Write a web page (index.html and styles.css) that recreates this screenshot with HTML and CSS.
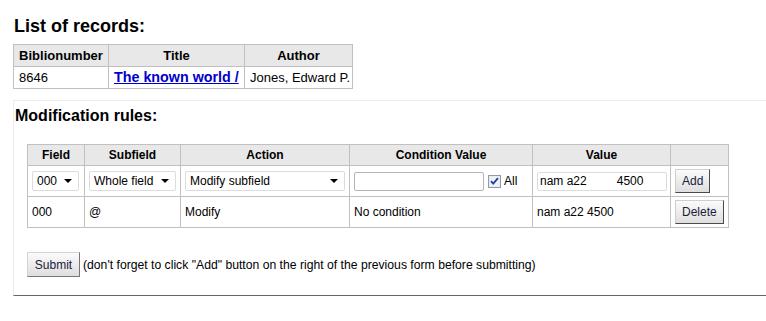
FILE: index.html
```html
<!DOCTYPE html>
<html>
<head>
<meta charset="utf-8">
<title>Batch record modification</title>
<link rel="stylesheet" href="styles.css">
</head>
<body>
<div class="page">
  <h1 class="title">List of records:</h1>
  <table class="records">
    <colgroup><col class="c-bib"><col class="c-title"><col class="c-author"></colgroup>
    <thead>
      <tr><th>Biblionumber</th><th>Title</th><th>Author</th></tr>
    </thead>
    <tbody>
      <tr><td>8646</td><td><a class="rec-link" href="#">The known world /</a></td><td>Jones, Edward P.</td></tr>
    </tbody>
  </table>

  <div class="rules-box">
    <h2 class="subtitle">Modification rules:</h2>
    <table class="rules">
      <colgroup><col class="r-field"><col class="r-sub"><col class="r-action"><col class="r-cond"><col class="r-value"><col class="r-btn"></colgroup>
      <thead>
        <tr><th>Field</th><th>Subfield</th><th>Action</th><th>Condition Value</th><th>Value</th><th></th></tr>
      </thead>
      <tbody>
        <tr class="form-row">
          <td><span class="sel sel-field"><select><option>000</option></select></span></td>
          <td><span class="sel sel-sub"><select><option>Whole field</option></select></span></td>
          <td><span class="sel sel-action"><select><option>Modify subfield</option></select></span></td>
          <td>
            <div class="cond">
              <input class="txt txt-cond" type="text">
              <label class="chk"><svg width="13" height="13" viewBox="0 0 13 13"><rect x="0.5" y="0.5" width="12" height="12" fill="#dfe6ef" stroke="#8c9cb3"/><rect x="1.5" y="1.5" width="10" height="10" fill="#eef2f7"/><path d="M3 6.2 L5.2 8.6 L10 3.2" fill="none" stroke="#21409a" stroke-width="1.8"/></svg><span>All</span></label>
            </div>
          </td>
          <td><input class="txt txt-value" type="text" value="nam a22         4500"></td>
          <td><button class="btn" type="button">Add</button></td>
        </tr>
        <tr class="data-row">
          <td>000</td>
          <td>@</td>
          <td>Modify</td>
          <td>No condition</td>
          <td>nam a22 4500</td>
          <td><button class="btn" type="button">Delete</button></td>
        </tr>
      </tbody>
    </table>

    <div class="submit-line">
      <button class="btn btn-submit" type="button">Submit</button>
      <span class="hint">(don't forget to click "Add" button on the right of the previous form before submitting)</span>
    </div>
  </div>
</div>
</body>
</html>
```

FILE: styles.css
```css
html, body {
  margin: 0;
  padding: 0;
  background: #ffffff;
}

body {
  font-family: "Liberation Sans", Arial, sans-serif;
  color: #000;
  font-size: 12px;
}

.page {
  padding-left: 13px;
}

.title {
  font-size: 18px;
  line-height: 22px;
  font-weight: bold;
  margin: 15px 0 7px 1px;
}

.records {
  border-collapse: collapse;
  table-layout: fixed;
  width: 340px;
  font-size: 13px;
}

.c-bib { width: 95px; }
.c-title { width: 136px; }
.c-author { width: 108px; }

.records th,
.records td {
  border: 1px solid #c0c0c0;
  padding: 3px 5px;
  line-height: 15px;
  white-space: nowrap;
  overflow: hidden;
}

.records th {
  background: #e8e8e8;
  font-weight: bold;
  text-align: center;
}

.records td {
  text-align: left;
}

.rec-link {
  color: #0000cc;
  font-weight: bold;
  font-size: 14.3px;
  text-decoration: underline;
}

.rules-box {
  margin-top: 11px;
  border-top: 1px solid #ececec;
  border-left: 1px solid #ececec;
  border-bottom: 1px solid #666;
  padding: 5px 0 18px 1px;
}

.subtitle {
  font-size: 16px;
  line-height: 20px;
  font-weight: bold;
  margin: 0 0 18px 0;
}

.rules {
  border-collapse: collapse;
  table-layout: fixed;
  width: 702px;
  margin-left: 12px;
  font-size: 12px;
}

.r-field { width: 57px; }
.r-sub { width: 96px; }
.r-action { width: 169px; }
.r-cond { width: 183px; }
.r-value { width: 138px; }
.r-btn { width: 58px; }

.rules th,
.rules td {
  border: 1px solid #c0c0c0;
  padding: 0 4px;
  white-space: nowrap;
}

.rules th {
  background: #e8e8e8;
  font-weight: bold;
  text-align: center;
  height: 20px;
  line-height: 16px;
}

.rules td {
  height: 30px;
  text-align: left;
  vertical-align: middle;
}

.sel {
  position: relative;
  display: inline-block;
  vertical-align: middle;
}

.sel::after {
  content: "";
  position: absolute;
  right: 7px;
  top: 8px;
  border-left: 4px solid transparent;
  border-right: 4px solid transparent;
  border-top: 4px solid #000;
  pointer-events: none;
}

.sel select {
  -webkit-appearance: none;
  appearance: none;
  font-family: "Liberation Sans", Arial, sans-serif;
  font-size: 12px;
  color: #000;
  background: #fff;
  border: 1px solid #dcdcdc;
  border-radius: 2px;
  height: 20px;
  padding: 0 0 0 4px;
  margin: 0;
  display: block;
}

.sel-field select { width: 47px; }
.sel-sub select { width: 87px; }
.sel-action select { width: 160px; }

.cond {
  display: flex;
  align-items: center;
}

.txt {
  font-family: "Liberation Sans", Arial, sans-serif;
  font-size: 12px;
  color: #000;
  height: 19px;
  box-sizing: border-box;
  border: 1px solid #c8c8c8;
  border-radius: 2px;
  padding: 0 2px;
  margin: 0;
  background: #fff;
  white-space: pre;
}

.txt-cond {
  width: 130px;
  border-color: #b4b4b4;
}

.txt-value {
  width: 130px;
  border-color: #dcdcdc;
  display: block;
}

.chk {
  display: flex;
  align-items: center;
  margin-left: 4px;
  gap: 3px;
  font-size: 12px;
}

.chk svg {
  display: block;
}

.btn {
  font-family: "Liberation Sans", Arial, sans-serif;
  font-size: 12px;
  color: #1b1b3a;
  background: linear-gradient(#fbfbfb, #dedede);
  border-style: solid;
  border-width: 1px;
  border-color: #cfcfcf #4a4a4a #4a4a4a #cfcfcf;
  border-radius: 0;
  height: 24px;
  padding: 0 6px;
  margin: 0;
  display: block;
}

.submit-line {
  margin-top: 24px;
  margin-left: 12px;
  display: flex;
  align-items: center;
  gap: 3px;
}

.btn-submit {
  height: 25px;
  width: 53px;
  padding: 0;
  border-color: #d4d4d4 #777 #777 #d4d4d4;
}

.hint {
  font-size: 12.2px;
}
```
